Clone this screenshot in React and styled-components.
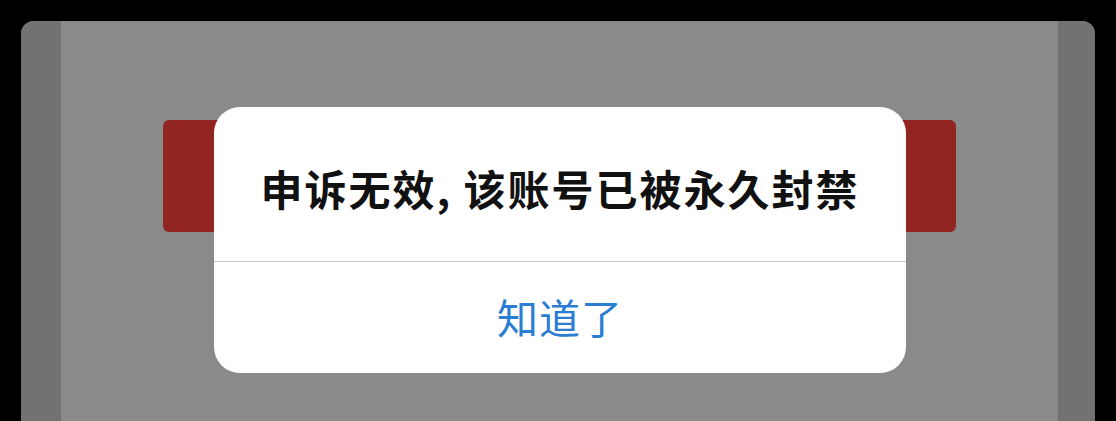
import styled, { createGlobalStyle } from "styled-components"

const GlobalStyle = createGlobalStyle`
  html, body {
    margin: 0;
    padding: 0;
    background: #000;
    height: 100%;
    overflow: hidden;
  }
  #root {
    height: 100%;
  }
`

const Stage = styled.main`
  height: 100%;
  padding: 21px 21px 0 21px;
  box-sizing: border-box;
  font-family: "Noto Sans CJK SC", "Noto Sans", sans-serif;
`

const Screen = styled.section`
  position: relative;
  height: 100%;
  display: grid;
  grid-template-columns: 40px 1fr 37px;
  border-radius: 13px 13px 0 0;
  overflow: hidden;
  background: #8a8a8a;
`

const SideStrip = styled.div`
  background: #727272;
`

const Content = styled.div`
  padding: 99px 102px 0 102px;
`

const DangerButton = styled.div`
  height: 112px;
  border-radius: 6px;
  background: #922421;
`

// iOS-style alert sitting over the dimmed screen
const AlertBox = styled.div`
  position: absolute;
  left: 193px;
  top: 86px;
  width: 692px;
  height: 266px;
  background: #fff;
  border-radius: 26px;
  display: flex;
  flex-direction: column;
  overflow: hidden;
`

const AlertMessage = styled.div`
  height: 155px;
  display: flex;
  align-items: center;
  justify-content: center;
  font-size: 42px;
  font-weight: 600;
  letter-spacing: 2px;
  color: #111;
  border-bottom: 1px solid #c9c9c9;
  box-sizing: border-box;
  padding-top: 6px;
`

const AlertAction = styled.button`
  flex: 1;
  border: none;
  background: transparent;
  font-family: inherit;
  font-size: 41px;
  font-weight: 400;
  letter-spacing: 1px;
  color: #2a7dd2;
  padding: 0 0 4px 0;
  cursor: pointer;
`

export default function App() {
  return (
    <>
      <GlobalStyle />
      <Stage>
        <Screen>
          <SideStrip />
          <Content>
            <DangerButton />
          </Content>
          <SideStrip />
          <AlertBox>
            <AlertMessage>申诉无效, 该账号已被永久封禁</AlertMessage>
            <AlertAction>知道了</AlertAction>
          </AlertBox>
        </Screen>
      </Stage>
    </>
  )
}
